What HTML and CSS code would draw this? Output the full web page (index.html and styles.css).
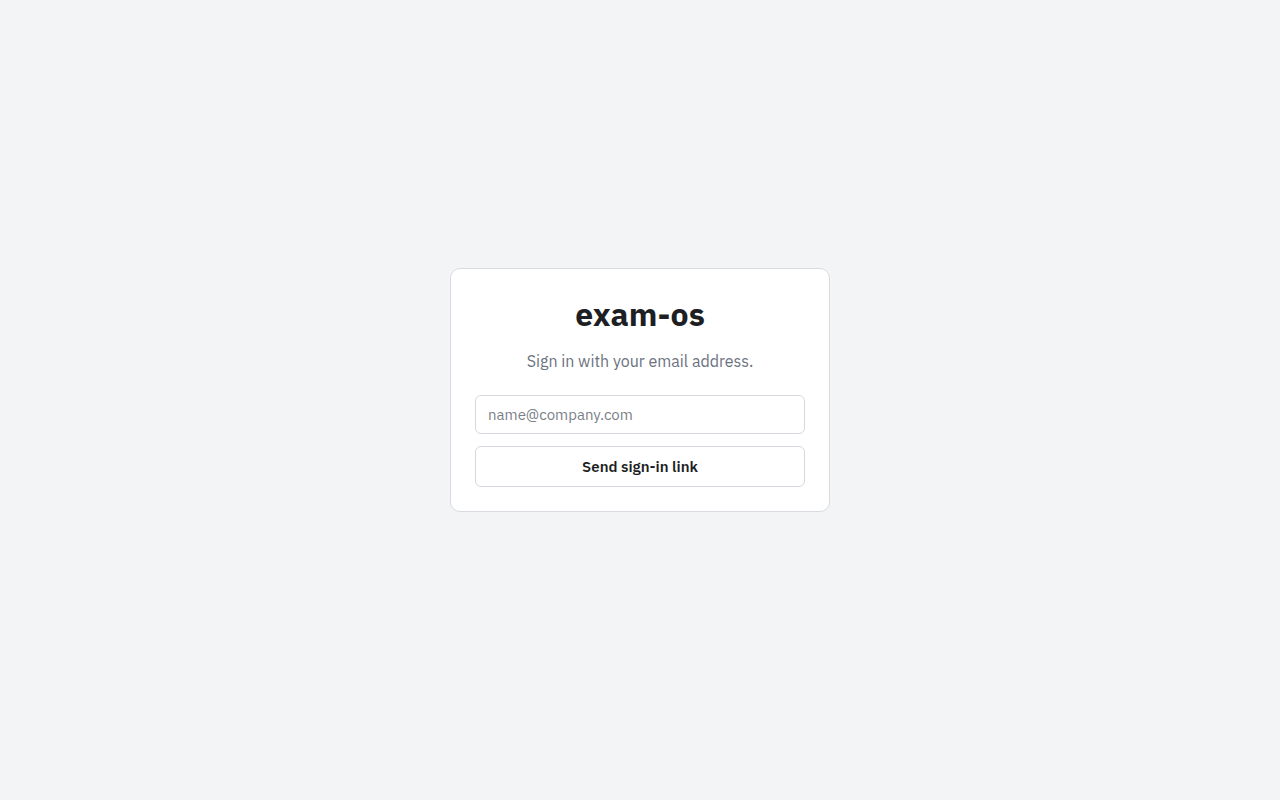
FILE: index.html
```html
<!DOCTYPE html>
<html lang="en">
<head>
    <meta charset="UTF-8">
    <meta name="viewport" content="width=device-width, initial-scale=1.0">
    <title>exam-os</title>
    <link rel="stylesheet" href="styles.css">
</head>
<body>
    <div class="page">
        <form class="login-card" onsubmit="return false;">
            <h1>exam-os</h1>
            <p class="subtitle">Sign in with your email address.</p>
            <input type="email" class="email-input" placeholder="name@company.com">
            <button type="submit" class="send-button">Send sign-in link</button>
        </form>
    </div>
</body>
</html>
```

FILE: styles.css
```css
body {
    font-family: "IBM Plex Sans", "Noto Sans", "Liberation Sans", sans-serif;
    background-color: #f3f4f6;
    margin: 0;
    padding: 0;
    color: #1d1f24;
}
.page {
    min-height: 100vh;
    box-sizing: border-box;
    padding-bottom: 20px;
    display: flex;
    align-items: center;
    justify-content: center;
}
.login-card {
    width: 380px;
    box-sizing: border-box;
    padding: 24px;
    background-color: #fff;
    border: 1px solid #d9dbe0;
    border-radius: 10px;
    display: flex;
    flex-direction: column;
}
h1 {
    margin: 2px 0 16px;
    font-size: 32px;
    line-height: 38px;
    font-weight: 700;
    text-align: center;
    color: #1d1f24;
}
.subtitle {
    margin: 0 0 22px;
    font-size: 16px;
    line-height: 24px;
    text-align: center;
    color: #6b7280;
}
.email-input {
    height: 39px;
    box-sizing: border-box;
    padding: 0 12px;
    font-family: inherit;
    font-size: 15px;
    color: #1d1f24;
    border: 1px solid #d6d8de;
    border-radius: 6px;
    outline: none;
}
.email-input::placeholder {
    color: #7b7f87;
}
.send-button {
    margin-top: 12px;
    height: 41px;
    font-family: inherit;
    font-size: 15px;
    font-weight: 600;
    color: #1d1f24;
    background-color: #fff;
    border: 1px solid #d6d8de;
    border-radius: 6px;
    cursor: pointer;
}
.send-button:hover {
    background-color: #f9fafb;
}
```
